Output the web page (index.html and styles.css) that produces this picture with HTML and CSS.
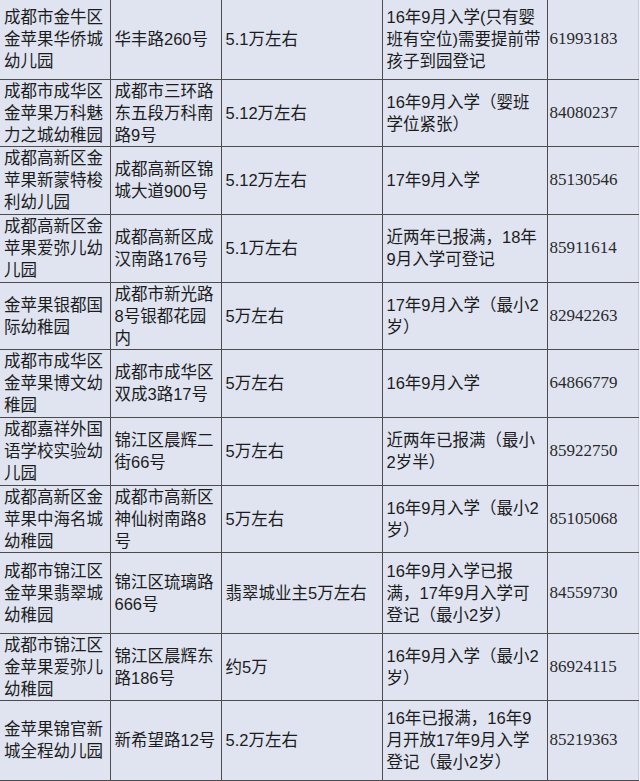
FILE: index.html
```html
<!DOCTYPE html>
<html lang="zh">
<head>
<meta charset="utf-8">
<link rel="stylesheet" href="styles.css">
</head>
<body>
<table class="sheet">
  <colgroup>
    <col class="c-name"><col class="c-addr"><col class="c-fee"><col class="c-note"><col class="c-tel">
  </colgroup>
  <tr class="h79">
    <td>成都市金牛区<br>金苹果华侨城<br>幼儿园</td>
    <td>华丰路260号</td>
    <td>5.1万左右</td>
    <td>16年9月入学(只有婴<br>班有空位)需要提前带<br>孩子到园登记</td>
    <td class="tel">61993183</td>
  </tr>
  <tr class="h67">
    <td>成都市成华区<br>金苹果万科魅<br>力之城幼稚园</td>
    <td>成都市三环路<br>东五段万科南<br>路9号</td>
    <td>5.12万左右</td>
    <td>16年9月入学（婴班<br>学位紧张）</td>
    <td class="tel">84080237</td>
  </tr>
  <tr class="h68">
    <td>成都高新区金<br>苹果新蒙特梭<br>利幼儿园</td>
    <td>成都高新区锦<br>城大道900号</td>
    <td>5.12万左右</td>
    <td>17年9月入学</td>
    <td class="tel">85130546</td>
  </tr>
  <tr class="h68">
    <td>成都高新区金<br>苹果爱弥儿幼<br>儿园</td>
    <td>成都高新区成<br>汉南路176号</td>
    <td>5.1万左右</td>
    <td>近两年已报满，18年<br>9月入学可登记</td>
    <td class="tel">85911614</td>
  </tr>
  <tr class="h67">
    <td>金苹果银都国<br>际幼稚园</td>
    <td>成都市新光路<br>8号银都花园<br>内</td>
    <td>5万左右</td>
    <td>17年9月入学（最小2<br>岁）</td>
    <td class="tel">82942263</td>
  </tr>
  <tr class="h68">
    <td>成都市成华区<br>金苹果博文幼<br>稚园</td>
    <td>成都市成华区<br>双成3路17号</td>
    <td>5万左右</td>
    <td>16年9月入学</td>
    <td class="tel">64866779</td>
  </tr>
  <tr class="h68">
    <td>成都嘉祥外国<br>语学校实验幼<br>儿园</td>
    <td>锦江区晨辉二<br>街66号</td>
    <td>5万左右</td>
    <td>近两年已报满（最小<br>2岁半）</td>
    <td class="tel">85922750</td>
  </tr>
  <tr class="h67">
    <td>成都高新区金<br>苹果中海名城<br>幼稚园</td>
    <td>成都市高新区<br>神仙树南路8<br>号</td>
    <td>5万左右</td>
    <td>16年9月入学（最小2<br>岁）</td>
    <td class="tel">85105068</td>
  </tr>
  <tr class="h81">
    <td>成都市锦江区<br>金苹果翡翠城<br>幼稚园</td>
    <td>锦江区琉璃路<br>666号</td>
    <td>翡翠城业主5万左右</td>
    <td>16年9月入学已报<br>满，17年9月入学可<br>登记（最小2岁）</td>
    <td class="tel">84559730</td>
  </tr>
  <tr class="h67">
    <td>成都市锦江区<br>金苹果爱弥儿<br>幼稚园</td>
    <td>锦江区晨辉东<br>路186号</td>
    <td>约5万</td>
    <td>16年9月入学（最小2<br>岁）</td>
    <td class="tel">86924115</td>
  </tr>
  <tr class="h80">
    <td>金苹果锦官新<br>城全程幼儿园</td>
    <td>新希望路12号</td>
    <td>5.2万左右</td>
    <td>16年已报满，16年9<br>月开放17年9月入学<br>登记（最小2岁）</td>
    <td class="tel">85219363</td>
  </tr>
</table>
</body>
</html>
```
FILE: styles.css
```css
html, body {
  margin: 0;
  padding: 0;
  background: #eef0f5;
}
.sheet {
  width: 638px;
  table-layout: fixed;
  border-collapse: collapse;
  background: #dfe4f0;
  font-family: "Liberation Sans", "Noto Sans CJK SC", sans-serif;
  font-size: 16.5px;
  line-height: 22px;
  color: #1c1c1c;
}
.c-name { width: 110px; }
.c-addr { width: 111px; }
.c-fee { width: 161px; }
.c-note { width: 165px; }
.c-tel { width: 91px; }
.sheet td {
  border: 1px solid #4c4c4c;
  padding: 0 0 0 4px;
  vertical-align: middle;
  white-space: nowrap;
  overflow: hidden;
}
.sheet tr:first-child td { border-top: none; }
.sheet td:first-child { border-left: none; padding-left: 4px; }
.sheet td:last-child { border-right: 1px solid #c8ccd6; }
.sheet td.tel {
  font-family: "Liberation Serif", serif;
  font-size: 17px;
  padding-left: 2px;
  color: #2a2a2a;
}
.h67 { height: 67px; }
.h68 { height: 68px; }
.h79 { height: 79px; }
.h80 { height: 80px; }
.h81 { height: 81px; }
```
